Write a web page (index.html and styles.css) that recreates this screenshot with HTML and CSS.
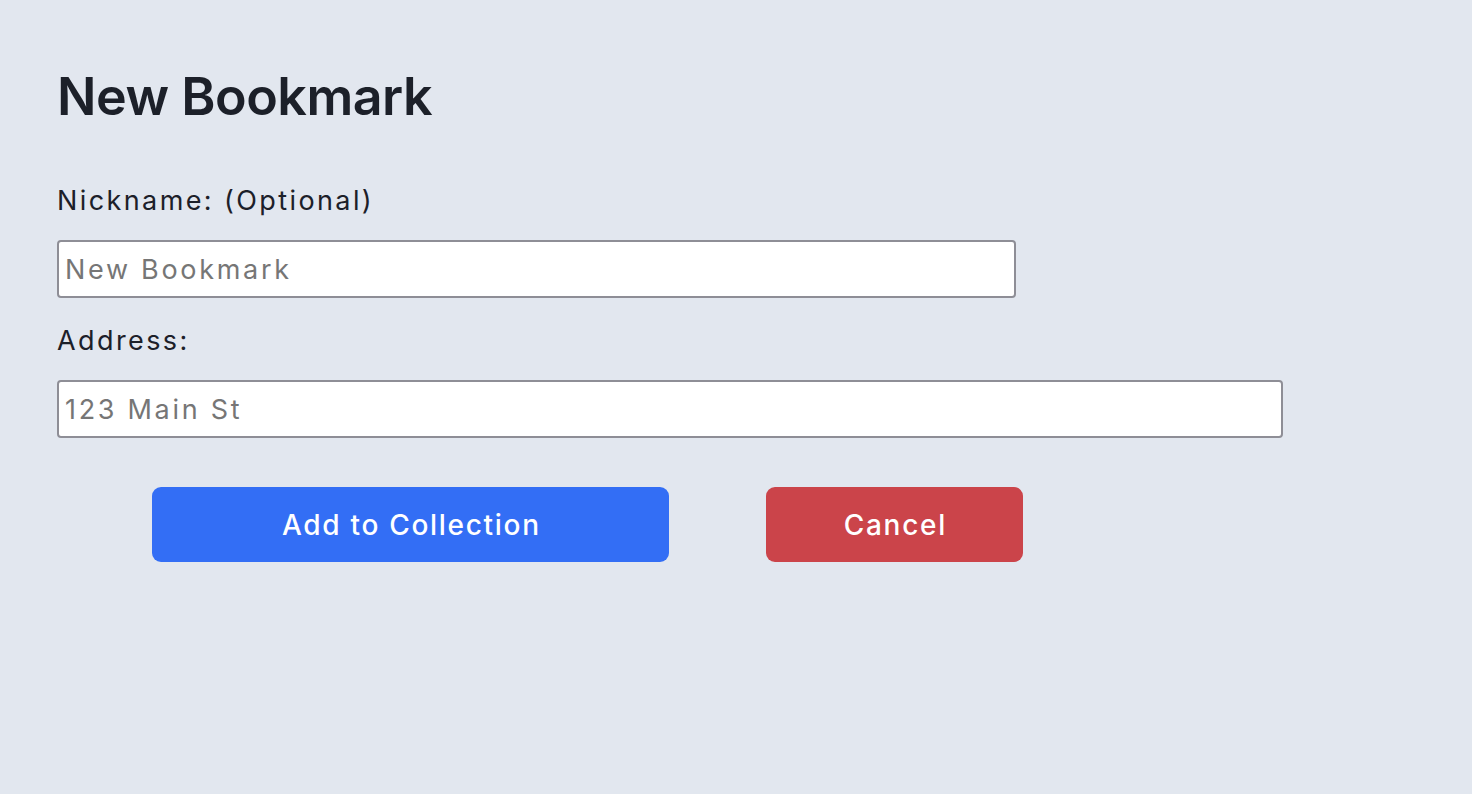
FILE: index.html
```html
<!DOCTYPE html>
<html lang="en">
<head>
<meta charset="utf-8">
<title>New Bookmark</title>
<link rel="stylesheet" href="styles.css">
</head>
<body>
<main class="page">
  <h1 class="title">New Bookmark</h1>
  <form class="form">
    <label class="label label-first" for="nick">Nickname: (Optional)</label>
    <input class="field field-nick" id="nick" type="text" placeholder="New Bookmark">
    <label class="label" for="addr">Address:</label>
    <input class="field field-addr" id="addr" type="text" placeholder="123 Main St">
    <div class="actions">
      <button type="button" class="btn btn-primary">Add to Collection</button>
      <button type="button" class="btn btn-danger">Cancel</button>
    </div>
  </form>
</main>
</body>
</html>
```
FILE: styles.css
```css
html, body {
  margin: 0;
  padding: 0;
}
body {
  background: #e2e7ef;
  font-family: Inter, "Liberation Sans", sans-serif;
  color: #1c2029;
  min-height: 794px;
}
.page {
  padding: 65px 57px 0 57px;
}
.title {
  margin: 0;
  font-size: 52px;
  line-height: 63px;
  font-weight: 600;
  letter-spacing: -0.5px;
}
.form {
  display: flex;
  flex-direction: column;
  align-items: flex-start;
}
.label {
  display: block;
  font-size: 27px;
  line-height: 32px;
  letter-spacing: 2.4px;
  margin-top: 27px;
  margin-bottom: 23px;
}
.label-first {
  margin-top: 57px;
}
.field {
  box-sizing: border-box;
  height: 58px;
  border: 2px solid #8e8e96;
  border-radius: 4px;
  background: #fff;
  padding: 0 6px;
  font-family: Inter, "Liberation Sans", sans-serif;
  font-size: 27px;
  letter-spacing: 2.7px;
  color: #1c2029;
  margin: 0;
  outline: none;
}
.field::placeholder {
  color: #767676;
}
.field-nick {
  width: 959px;
}
.field-addr {
  width: 1226px;
}
.actions {
  display: flex;
  gap: 97px;
  margin-top: 49px;
  padding-left: 95px;
}
.btn {
  box-sizing: border-box;
  height: 75px;
  border: none;
  border-radius: 9px;
  color: #fff;
  font-family: Inter, "Liberation Sans", sans-serif;
  font-size: 28px;
  font-weight: 500;
  letter-spacing: 1.7px;
  padding: 0 0 0 1.7px;
  cursor: pointer;
}
.btn-primary {
  width: 517px;
  background: #336ef5;
}
.btn-danger {
  width: 257px;
  background: #cb444a;
}
```
